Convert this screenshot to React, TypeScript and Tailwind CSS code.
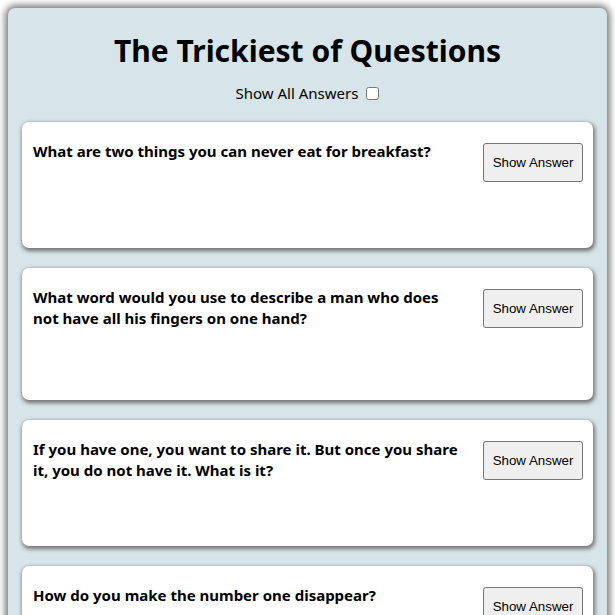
import React from "react";

const questions = [
  { q: "What are two things you can never eat for breakfast?", h: "h-[126px]" },
  { q: "What word would you use to describe a man who does not have all his fingers on one hand?", h: "h-[132px]" },
  { q: "If you have one, you want to share it. But once you share it, you do not have it. What is it?", h: "h-[126px]" },
  { q: "How do you make the number one disappear?", h: "h-[126px]" },
];

export default function App() {
  return (
    <div className="min-h-screen bg-white p-[8px] font-['Noto_Sans',sans-serif] text-black">
      <div className="rounded-[7px] bg-[#d7e5ea] px-[14px] pt-[23px] pb-[20px] shadow-[0_0_7px_3px_#7a7a7a]">
        <h1 className="text-center text-[30px] font-bold leading-[40px]">The Trickiest of Questions</h1>
        <div className="mt-[12px] flex items-center justify-center gap-[8px] text-[15px] leading-[21px]">
          <span>Show All Answers</span>
          <input type="checkbox" className="h-[13px] w-[13px]" />
        </div>
        <div className="mt-[18px] flex flex-col gap-[20px]">
          {questions.map((item, i) => (
            <div
              key={i}
              className={`${item.h} flex items-start justify-between rounded-[7px] bg-white pl-[11px] pr-[10px] pt-[19px] shadow-[1px_2px_4px_1px_#707070]`}
            >
              <p className="w-[430px] text-[15px] font-bold leading-[21px]">{item.q}</p>
              <button className="mt-[2px] h-[39px] w-[100px] shrink-0 rounded-[3px] border border-[#767676] bg-[#efefef] font-['Liberation_Sans',Arial,sans-serif] text-[13.33px] text-black">
                Show Answer
              </button>
            </div>
          ))}
        </div>
      </div>
    </div>
  );
}
